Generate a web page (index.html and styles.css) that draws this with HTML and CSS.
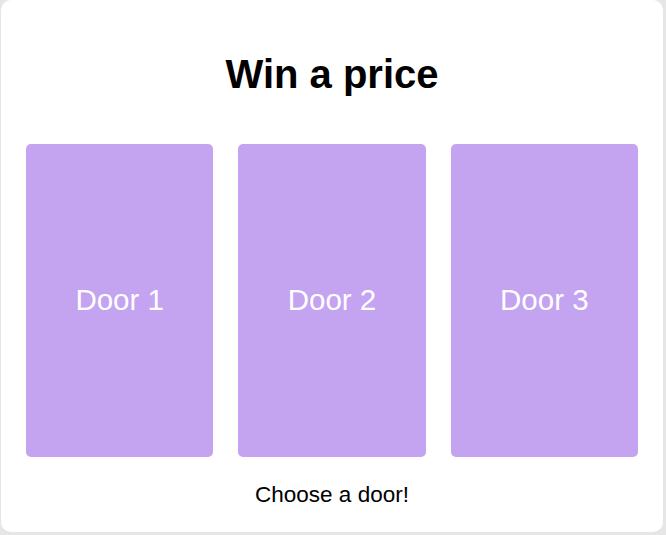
FILE: index.html
```html
<!DOCTYPE html>
<html>
<head>
<meta charset="utf-8">
<link rel="stylesheet" href="styles.css">
</head>
<body>
<div class="card">
  <h1 class="title">Win a price</h1>
  <div class="doors">
    <div class="door">Door 1</div>
    <div class="door">Door 2</div>
    <div class="door">Door 3</div>
  </div>
  <p class="hint">Choose a door!</p>
</div>
</body>
</html>
```
FILE: styles.css
```css
html, body {
  margin: 0;
  padding: 0;
  background: #e6e6e6;
  font-family: "Liberation Sans", Arial, sans-serif;
}
.card {
  box-sizing: border-box;
  margin: 0 3px 0 1px;
  height: 532px;
  background: #fff;
  border-radius: 10px;
  padding: 51px 25px 0 25px;
  display: flex;
  flex-direction: column;
}
.title {
  margin: 0;
  font-size: 40px;
  font-weight: bold;
  line-height: 46px;
  text-align: center;
  color: #000;
}
.doors {
  margin-top: 47px;
  display: grid;
  grid-template-columns: repeat(3, 1fr);
  gap: 25px;
}
.door {
  height: 313px;
  background: #c4a3f1;
  border-radius: 5px;
  color: #fff;
  font-size: 29.5px;
  line-height: 32px;
  padding-bottom: 2px;
  box-sizing: border-box;
  display: flex;
  align-items: center;
  justify-content: center;
}
.hint {
  margin: 25px 0 0;
  font-size: 22.5px;
  line-height: 25px;
  text-align: center;
  color: #000;
}
```
